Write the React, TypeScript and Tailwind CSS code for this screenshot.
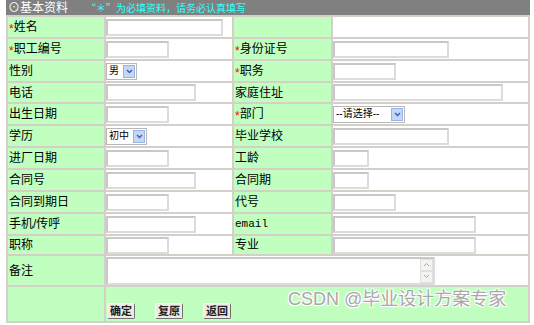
import React from 'react';

const font = { fontFamily: '"Liberation Sans", "Noto Sans CJK SC", sans-serif' };
const cjk = { fontFamily: '"Noto Sans CJK SC", sans-serif' };

function Star() {
  return <span className="text-[#ff0000] text-[12px] leading-none relative top-[2px]">*</span>;
}

function Label({ text, required, mono }: { text?: string; required?: boolean; mono?: boolean }) {
  return (
    <div className="bg-[#c0ffc0] flex items-center pl-[1px] text-[12px] text-black leading-none whitespace-nowrap">
      {required && <Star />}
      {mono ? (
        <span className="text-[11px]" style={{ fontFamily: '"Liberation Mono", monospace' }}>
          {text}
        </span>
      ) : (
        text
      )}
    </div>
  );
}

function Input({ w }: { w: number }) {
  return (
    <div
      className="h-[17px] bg-white border-2 border-t-[#c8c8c8] border-l-[#c8c8c8] border-r-[#dcdcdc] border-b-[#dcdcdc]"
      style={{ width: w }}
    />
  );
}

function Select({ text, w }: { text: string; w: number }) {
  return (
    <div
      className="h-[17px] bg-white border border-[#b8b8b8] flex items-center justify-between pl-[2px] pr-[1px]"
      style={{ width: w }}
    >
      <span className="text-[10px] leading-none text-black whitespace-nowrap">{text}</span>
      <span className="w-[12px] h-[13px] bg-[#c4d8f6] border border-[#98b4e6] flex items-center justify-center">
        <svg width="7" height="5" viewBox="0 0 7 5">
          <path d="M1 1 L3.5 3.5 L6 1" fill="none" stroke="#3a5ec4" strokeWidth="1.5" />
        </svg>
      </span>
    </div>
  );
}

function Cell({ children }: { children?: React.ReactNode }) {
  return <div className="bg-white flex items-center">{children}</div>;
}

function Button({ text }: { text: string }) {
  return (
    <div className="w-[28px] h-[16px] bg-[#ecebe4] border border-t-[#f8f8f8] border-l-[#f8f8f8] border-r-[#707070] border-b-[#707070] rounded-[2px] flex items-center justify-center text-[11px] leading-none text-[#202020] font-semibold">
      {text}
    </div>
  );
}

type Row = {
  l1: string;
  r1?: boolean;
  i1: React.ReactNode;
  l2: string;
  r2?: boolean;
  i2: React.ReactNode;
};

const rows: Row[] = [
  { l1: '姓名', r1: true, i1: <Input w={117} />, l2: '', i2: null },
  { l1: '职工编号', r1: true, i1: <Input w={63} />, l2: '身份证号', r2: true, i2: <Input w={116} /> },
  { l1: '性别', i1: <Select text="男" w={31} />, l2: '职务', r2: true, i2: <Input w={63} /> },
  { l1: '电话', i1: <Input w={90} />, l2: '家庭住址', i2: <Input w={170} /> },
  { l1: '出生日期', i1: <Input w={63} />, l2: '部门', r2: true, i2: <Select text="--请选择--" w={72} /> },
  { l1: '学历', i1: <Select text="初中" w={41} />, l2: '毕业学校', i2: <Input w={116} /> },
  { l1: '进厂日期', i1: <Input w={63} />, l2: '工龄', i2: <Input w={36} /> },
  { l1: '合同号', i1: <Input w={90} />, l2: '合同期', i2: <Input w={36} /> },
  { l1: '合同到期日', i1: <Input w={63} />, l2: '代号', i2: <Input w={63} /> },
  { l1: '手机/传呼', i1: <Input w={90} />, l2: 'email', i2: <Input w={143} /> },
  { l1: '职称', i1: <Input w={63} />, l2: '专业', i2: <Input w={143} /> },
];

export default function App() {
  return (
    <div className="w-[534px] h-[325px] bg-white relative overflow-hidden" style={font}>
      <div className="ml-[6px] w-[524px] bg-[#d4d0c8] px-[2px] pb-[2px] grid grid-cols-[96px_126px_97px_195px] grid-rows-[15px_20px_20px_20px_19px_20px_20px_20px_20px_20px_20px_18px_29px_34px] gap-[2px]">
        <div className="col-span-4 -mx-[2px] bg-[#808080] flex items-center pl-[2px]">
          <span className="text-[12px] leading-none text-white">⊙基本资料</span>
          <span className="ml-[18px] text-[10px] leading-none text-[#33ffff]" style={cjk}>
            “＊”为必填资料，请务必认真填写
          </span>
        </div>
        {rows.map((r, i) => (
          <React.Fragment key={i}>
            <Label text={r.l1} required={r.r1} />
            <Cell>{r.i1}</Cell>
            <Label text={r.l2} required={r.r2} mono={r.l2 === 'email'} />
            <Cell>{r.i2}</Cell>
          </React.Fragment>
        ))}
        <Label text="备注" />
        <div className="col-span-3 bg-white flex items-center">
          <div className="w-[329px] h-[28px] bg-white border-2 border-t-[#c8c8c8] border-l-[#c8c8c8] border-r-[#dcdcdc] border-b-[#dcdcdc] flex justify-end">
            <div className="w-[13px] h-full flex flex-col justify-between bg-[#f4f4f0]">
              <div className="h-[12px] flex items-center justify-center border border-[#e0e0e0]">
                <svg width="7" height="5" viewBox="0 0 7 5">
                  <path d="M1 4 L3.5 1.5 L6 4" fill="none" stroke="#a8a8a8" strokeWidth="1" />
                </svg>
              </div>
              <div className="h-[12px] flex items-center justify-center border border-[#e0e0e0]">
                <svg width="7" height="5" viewBox="0 0 7 5">
                  <path d="M1 1 L3.5 3.5 L6 1" fill="none" stroke="#a8a8a8" strokeWidth="1" />
                </svg>
              </div>
            </div>
          </div>
        </div>
        <Label />
        <div className="col-span-3 bg-[#c0ffc0] flex items-end pb-[2px] pl-[1px] gap-[20px]">
          <Button text="确定" />
          <Button text="复原" />
          <Button text="返回" />
        </div>
      </div>
      <div
        className="absolute left-[288px] top-[290px] text-[18px] leading-none text-[#a8a8a8] whitespace-nowrap"
        style={{ textShadow: '1px 1px 0 #fff, -1px -1px 0 #fff, 1px -1px 0 #fff, -1px 1px 0 #fff' }}
      >
        CSDN @毕业设计方案专家
      </div>
    </div>
  );
}
